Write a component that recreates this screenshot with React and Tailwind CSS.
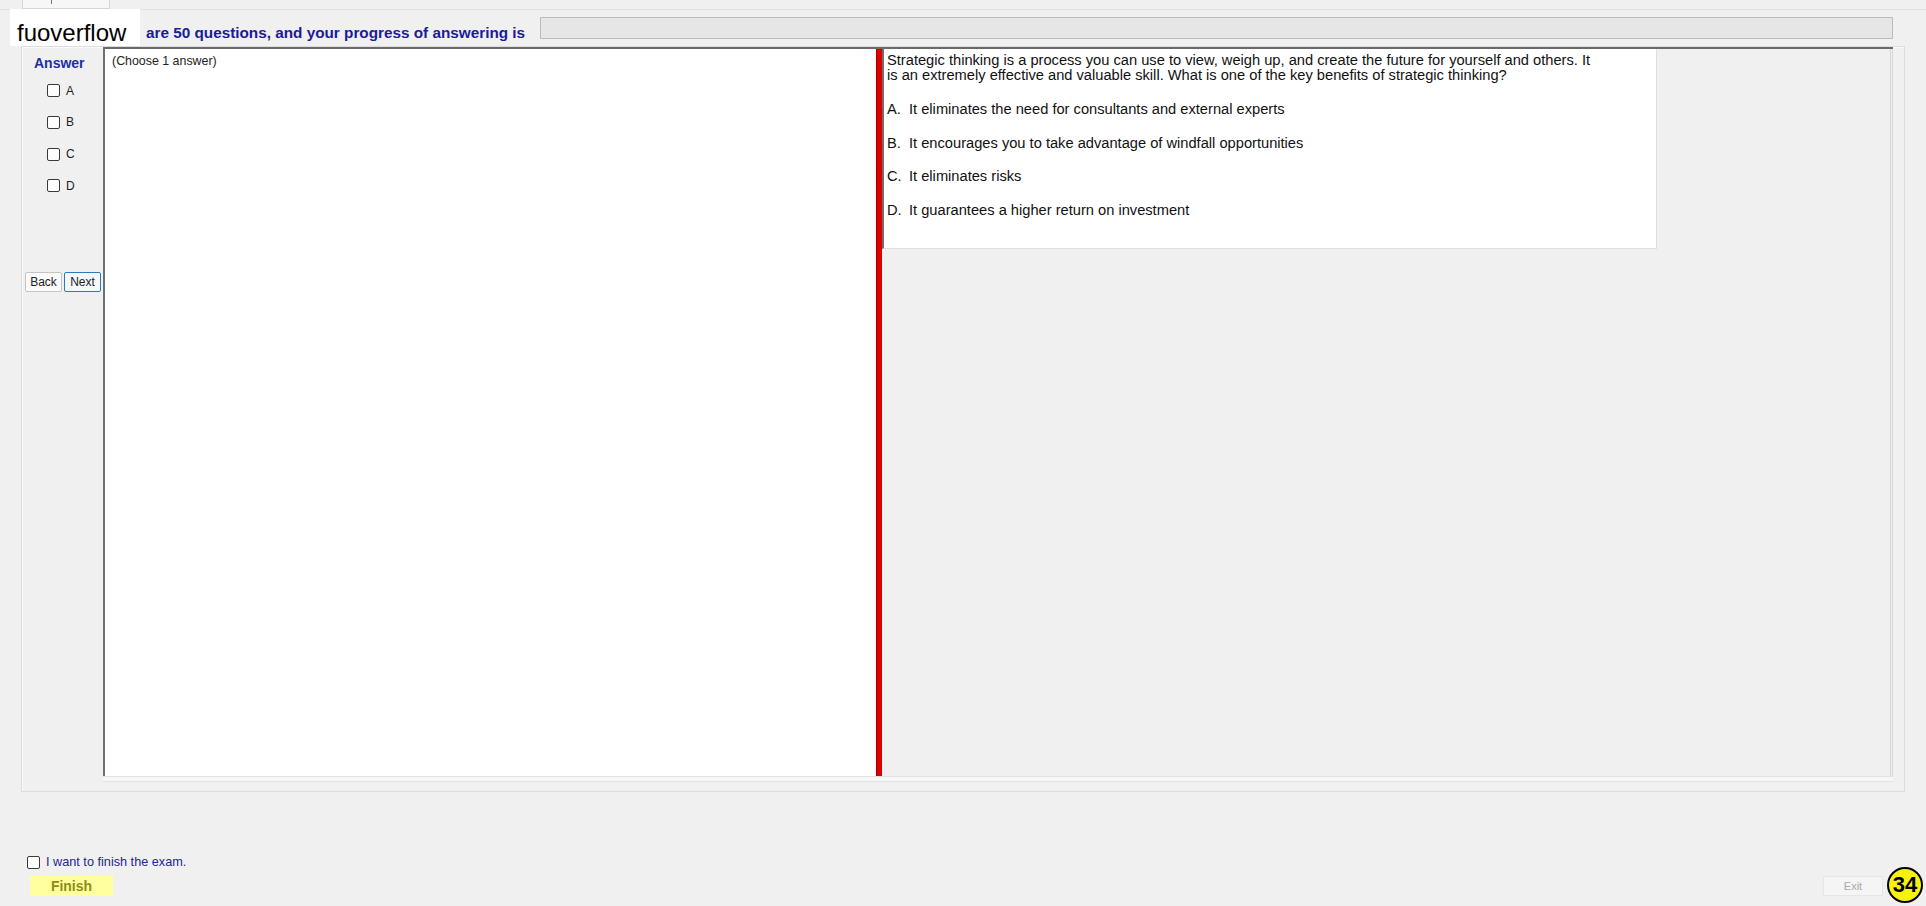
import React from "react";

const Box = ({ className = "" }) => (
  <span className={"block w-[13px] h-[13px] border border-[#3a3a3a] rounded-[2px] bg-white " + className} />
);

const options = [
  ["A.", "It eliminates the need for consultants and external experts", "mt-[19px]"],
  ["B.", "It encourages you to take advantage of windfall opportunities", "mt-[18.5px]"],
  ["C.", "It eliminates risks", "mt-[18.5px]"],
  ["D.", "It guarantees a higher return on investment", "mt-[18.5px]"],
];

export default function App() {
  return (
    <div className="w-[1926px] h-[906px] bg-[#f0f0f0] overflow-hidden relative font-['Liberation_Sans',Arial,sans-serif] text-black">
      {/* tab strip */}
      <div className="h-[10px] flex border-b border-[#e2e2e2]">
        <div className="ml-[22px] w-[88px] h-[9px] bg-[#f7f7f7] border-x border-b border-[#d6d6d6] flex justify-center">
          <span className="block w-[1px] h-[4px] bg-[#777] ml-[-30px]" />
        </div>
      </div>

      {/* header row */}
      <div className="flex items-center h-[37px] -mt-px">
        <div className="ml-[10px] w-[130px] h-full bg-white flex items-center pl-[7px] pt-[10px] text-[24px] leading-none">
          fuoverflow
        </div>
        <div className="w-[400px] pl-[6px] mt-[12px] text-[15.3px] font-bold text-[#1b1b9b] whitespace-nowrap">
          are 50 questions, and your progress of answering is
        </div>
        <div className="w-[1353px] h-[22px] bg-[#e6e6e6] border border-[#bcbcbc]" />
      </div>

      {/* main group box */}
      <div className="ml-[21px] w-[1884px] h-[746px] border border-[#dcdcdc] shadow-[inset_1px_1px_0_#fafafa] flex flex-col">
        <div className="flex h-[729px]">
          {/* answer column */}
          <div className="w-[81px] flex flex-col pt-[8px]">
            <div className="pl-[12px] h-[16px] leading-[16px] text-[14px] font-bold text-[#1c2fa6]">Answer</div>
            <div className="mt-[4px] flex flex-col">
              {["A", "B", "C", "D"].map((l) => (
                <div key={l} className="h-[31.67px] flex items-center pl-[25px] gap-[6px]">
                  <Box />
                  <span className="text-[12px] leading-none text-[#222]">{l}</span>
                </div>
              ))}
            </div>
            <div className="mt-[70px] pl-[3px] flex gap-[2px]">
              <button className="w-[37px] h-[20px] bg-[#fbfbfb] border border-[#c4c4c4] rounded-[2px] text-[12px] leading-none text-[#222]">
                Back
              </button>
              <button className="w-[37px] h-[20px] bg-[#f4f8fb] border border-[#2a7bbd] rounded-[2px] text-[12px] leading-none text-[#222]">
                Next
              </button>
            </div>
          </div>

          {/* panels */}
          <div className="flex w-[1790px] border-t-2 border-[#6a6a6a]">
            <div className="w-[773px] bg-white border-l-2 border-[#707070] pl-[7px] pt-[5px]">
              <div className="text-[12.4px] leading-[15px] text-[#222]">(Choose 1 answer)</div>
            </div>
            <div className="w-[6px] bg-[#dd0000] border-l border-[#a30000]" />
            <div className="w-[1011px] bg-[#f0f0f0] border-r-[3px] border-double border-[#d6d6d6] flex flex-col">
              <div className="w-[775px] h-[200px] bg-white border-l-2 border-[#6f6f6f] border-r border-b border-r-[#dedede] border-b-[#dedede] pl-[3px] pt-[4px] text-[14.67px] leading-[15px] text-[#111]">
                <div>
                  Strategic thinking is a process you can use to view, weigh up, and create the future for yourself and others. It
                  <br />
                  is an extremely effective and valuable skill. What is one of the key benefits of strategic thinking?
                </div>
                {options.map(([k, t, m]) => (
                  <div key={k} className={"flex " + m}>
                    <span className="w-[22px]">{k}</span>
                    <span>{t}</span>
                  </div>
                ))}
              </div>
            </div>
          </div>
        </div>
        <div className="ml-[81px] w-[1790px] h-[6px] bg-[#f6f6f6] border-t border-b border-[#e2e2e2]" />
      </div>

      {/* bottom */}
      <div className="mt-[64px] pl-[27px] flex items-center gap-[6px] h-[13px]">
        <Box className="w-[12px] h-[12px]" />
        <span className="text-[12.7px] leading-none text-[#26268f]">I want to finish the exam.</span>
      </div>
      <div className="mt-[7px] flex items-center h-[20px]">
        <button className="ml-[30px] w-[83px] h-[20px] bg-[#ffffa0] text-[14px] font-bold text-[#8d8d10] leading-none">
          Finish
        </button>
        <div className="ml-auto mr-[43px] w-[60px] h-[20px] bg-[#f5f5f5] border border-[#e6e6e6] flex items-center justify-center text-[11px] text-[#a8a8a8]">
          Exit
        </div>
      </div>

      {/* badge */}
      <div className="absolute left-[1887px] top-[867px] w-[36px] h-[36px] rounded-full bg-[#f7f10e] border-2 border-black flex items-center justify-center text-[22px] font-bold leading-none">
        34
      </div>
    </div>
  );
}
